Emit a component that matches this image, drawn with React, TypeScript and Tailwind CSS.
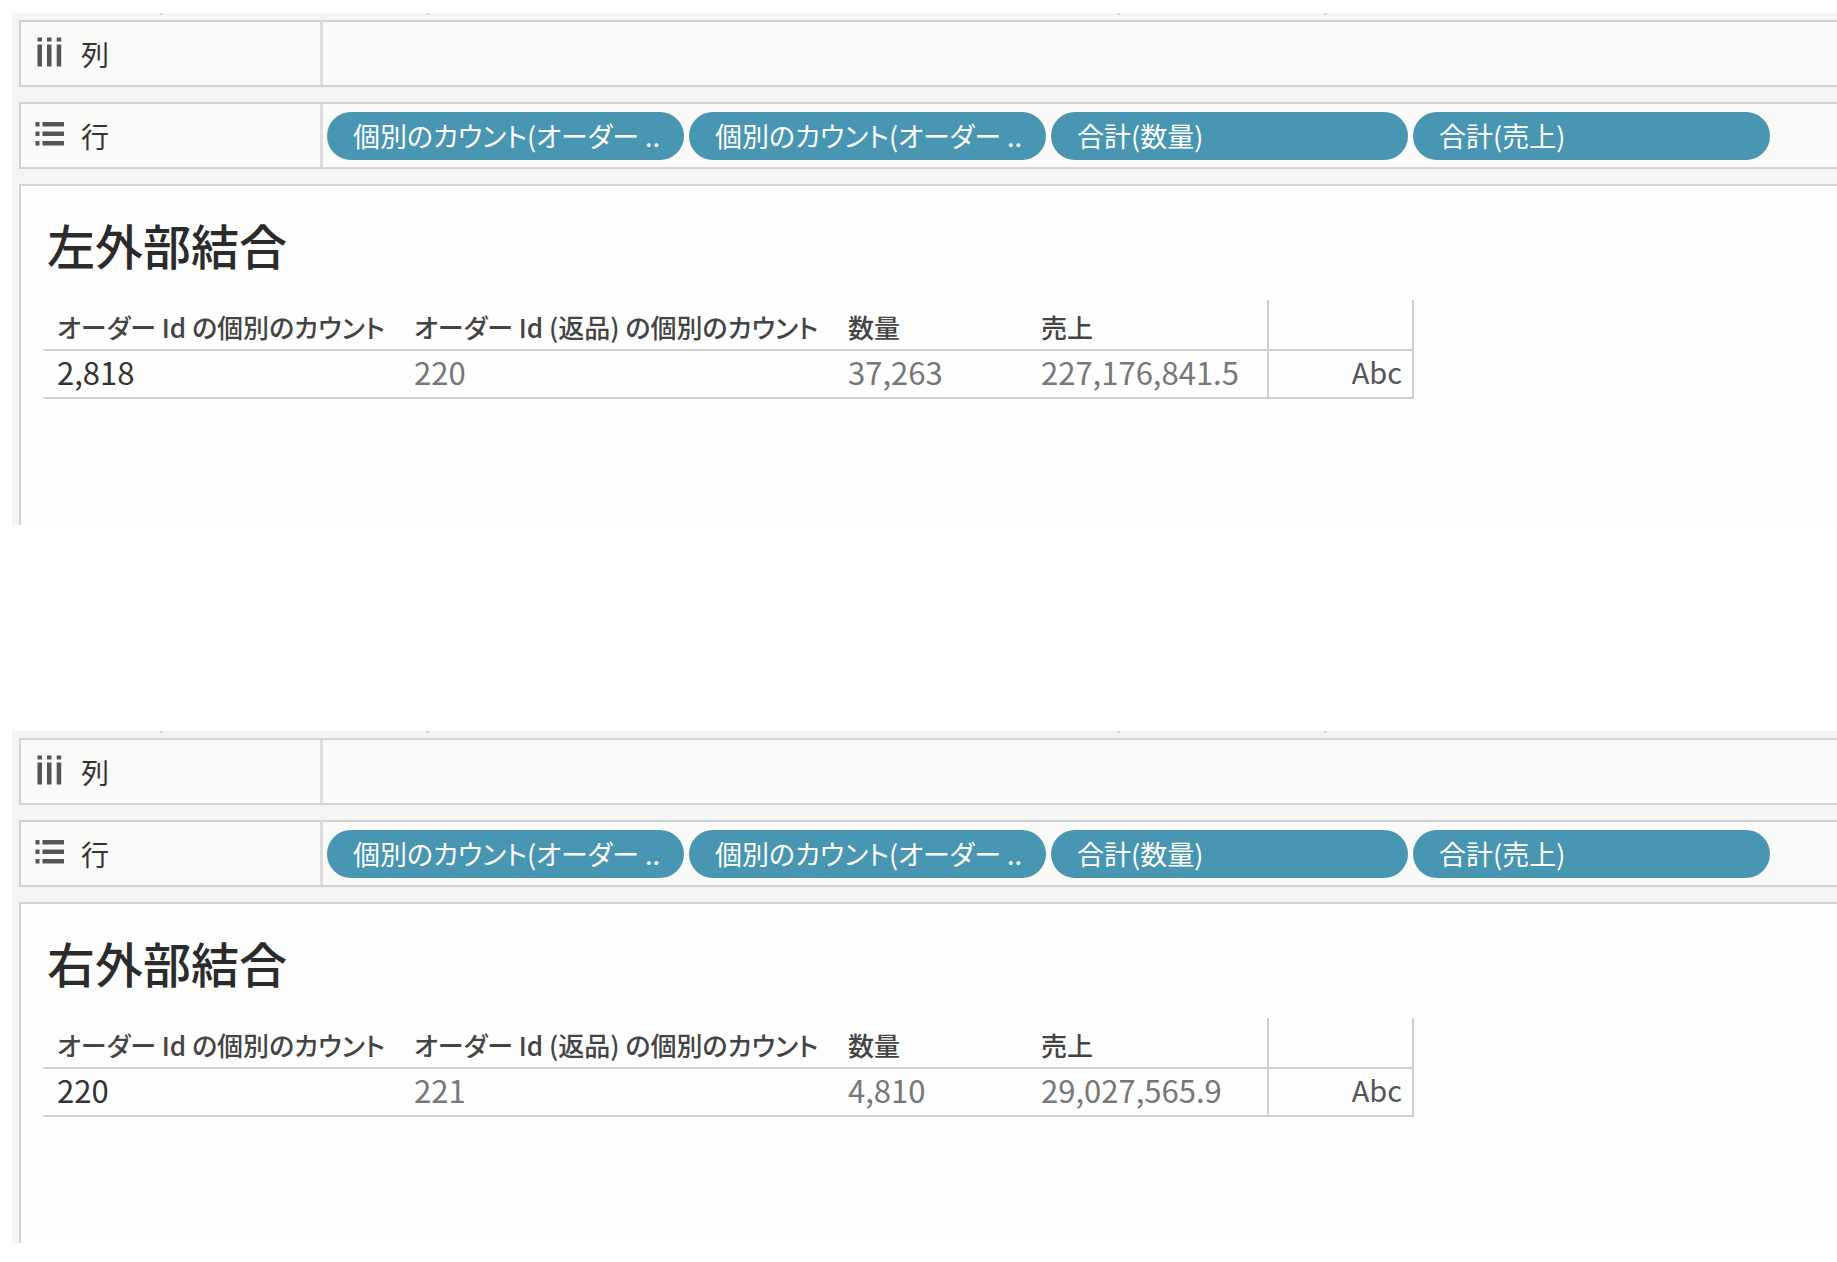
import React from "react";

const pills = ["個別のカウント(オーダー ..", "個別のカウント(オーダー ..", "合計(数量)", "合計(売上)"];
const headers = ["オーダー Id の個別のカウント", "オーダー Id (返品) の個別のカウント", "数量", "売上"];

function ColumnsIcon() {
  return (
    <svg className="mb-1 h-8 w-8 shrink-0" viewBox="0 0 32 32" fill="#555555" aria-hidden="true">
      {[4.5, 14, 23.7].map((x) => (
        <g key={x}>
          <rect x={x} y="1.5" width="4.5" height="4" />
          <rect x={x} y="8.5" width="4.5" height="22" />
        </g>
      ))}
    </svg>
  );
}

function RowsIcon() {
  return (
    <svg className="mb-1 h-8 w-8 shrink-0" viewBox="0 0 32 32" fill="#555555" aria-hidden="true">
      {[4, 13.5, 23].map((y) => (
        <g key={y}>
          <rect x="2.5" y={y} width="4" height="4.5" />
          <rect x="9.5" y={y} width="21.5" height="4.5" />
        </g>
      ))}
    </svg>
  );
}

function Shelf({ icon, label, items }: { icon: React.ReactNode; label: string; items: string[] }) {
  return (
    <div className="flex h-[67px] border-2 border-r-0 border-[#d2d3d3] bg-[#fafaf9]">
      <div className="flex w-[302px] shrink-0 items-center gap-4 border-r-[3px] border-[#dcdddd] pl-3 text-[28px] leading-8 text-[#333333]">
        {icon}
        <span>{label}</span>
      </div>
      <div className="flex min-w-0 items-center gap-[5px] overflow-hidden pl-1">
        {items.map((text, i) => (
          <button
            key={i}
            type="button"
            className="h-12 w-[357px] shrink-0 rounded-full bg-[#4996b2] pl-[26px] text-left text-[27px] leading-8 whitespace-nowrap text-white"
          >
            {text}
          </button>
        ))}
      </div>
    </div>
  );
}

function Ticks() {
  return (
    <div className="flex h-[7px]" aria-hidden="true">
      <span className="ml-[148px] h-[2px] w-[3px] bg-[#d8d9d9]" />
      <span className="ml-[263px] h-[2px] w-[3px] bg-[#d8d9d9]" />
      <span className="ml-[688px] h-[2px] w-[3px] bg-[#d8d9d9]" />
      <span className="ml-[204px] h-[2px] w-[3px] bg-[#d8d9d9]" />
    </div>
  );
}

function Worksheet({ title, values }: { title: string; values: string[] }) {
  return (
    <section className="bg-[#f3f5f4]">
      <Ticks />
      <div className="flex flex-col gap-[15px] pl-[7px]">
        <Shelf icon={<ColumnsIcon />} label="列" items={[]} />
        <Shelf icon={<RowsIcon />} label="行" items={pills} />
        <div className="border-t-2 border-l-2 border-[#d2d3d3] bg-[#fefefe] pt-7 pb-[126px] pl-[22px]">
          <h2 className="pl-1 text-[48px] leading-[60px] font-medium text-[#2b2b2b]">{title}</h2>
          <table className="mt-[26px] w-[1370px] table-fixed border-collapse text-left whitespace-nowrap">
            <colgroup>
              <col className="w-[357px]" />
              <col className="w-[434px]" />
              <col className="w-[193px]" />
              <col className="w-[241px]" />
              <col className="w-[145px]" />
            </colgroup>
            <thead>
              <tr className="h-[50px] border-b-2 border-[#cfcfcf]">
                {headers.map((h) => (
                  <th key={h} scope="col" className="p-0 pt-1 pl-[14px] text-[26px] leading-8 font-medium text-[#444444]">
                    {h}
                  </th>
                ))}
                <td className="border-x-2 border-[#cfcfcf] p-0" />
              </tr>
            </thead>
            <tbody>
              <tr className="h-12 border-b-2 border-[#cfcfcf] text-[31px] leading-8 text-[#777777]">
                <th scope="row" className="p-0 pb-1 pl-[14px] font-normal text-[#333333]">
                  {values[0]}
                </th>
                {values.slice(1).map((v) => (
                  <td key={v} className="p-0 pb-1 pl-[14px]">
                    {v}
                  </td>
                ))}
                <td className="border-x-2 border-[#cfcfcf] p-0 pr-[10px] pb-[6px] text-right text-[29px] text-[#555555]">Abc</td>
              </tr>
            </tbody>
          </table>
        </div>
      </div>
    </section>
  );
}

export default function App() {
  return (
    <main
      lang="ja"
      className="flex min-h-screen flex-col gap-[206px] bg-white pt-[13px] pb-4 pl-3 font-['Noto_Sans_CJK_JP',sans-serif] [font-feature-settings:'palt']"
    >
      <Worksheet title="左外部結合" values={["2,818", "220", "37,263", "227,176,841.5"]} />
      <Worksheet title="右外部結合" values={["220", "221", "4,810", "29,027,565.9"]} />
    </main>
  );
}
